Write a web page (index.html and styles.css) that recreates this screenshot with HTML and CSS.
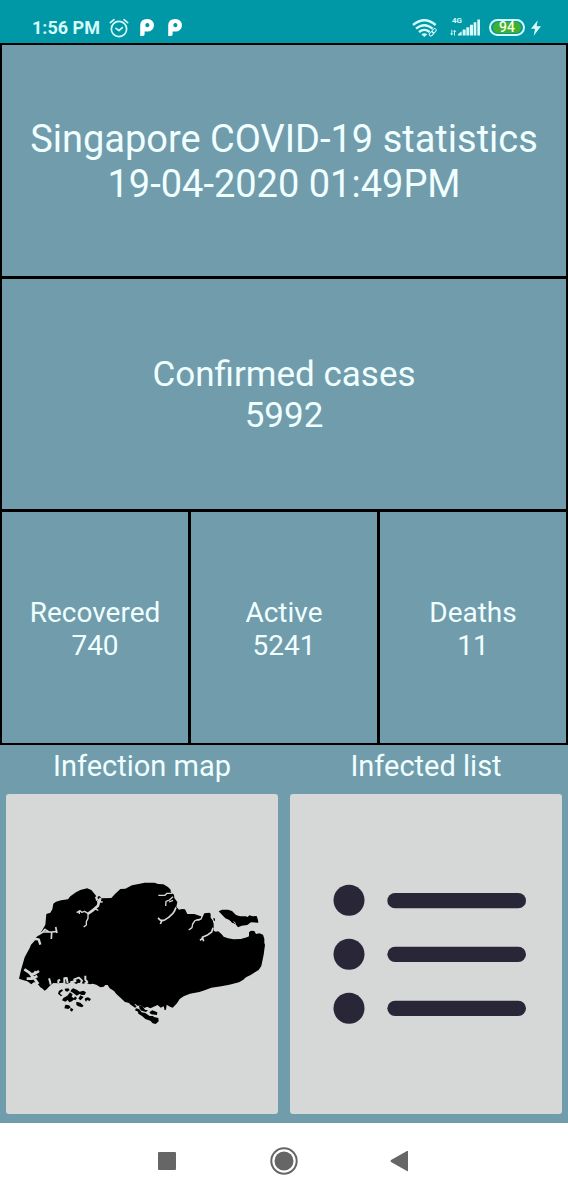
FILE: index.html
```html
<!DOCTYPE html>
<html lang="en">
<head>
<meta charset="utf-8">
<meta name="viewport" content="width=device-width, initial-scale=1">
<title>Singapore COVID-19 statistics</title>
<link rel="stylesheet" href="styles.css">
</head>
<body>
<header class="status">
  <div class="status-left">
    <span class="clock">1:56 PM</span>
    <svg class="alarm" viewBox="0 0 60 60" fill="none" stroke="currentColor" stroke-width="5" stroke-linecap="round" stroke-linejoin="round" aria-hidden="true">
      <circle cx="30" cy="33" r="23"/><path d="M4 14 15 5M56 14 45 5M21 31l9 7 10-9"/>
    </svg>
    <svg class="app" viewBox="0 0 40 50" fill="currentColor" fill-rule="evenodd" aria-hidden="true">
      <path d="M0 50V19Q1 0 20 0h2a18 18 0 0 1 0 37h-9v8q0 5-5 5zM21 12a6 6 0 1 0 .1 0z"/>
    </svg>
    <svg class="app" viewBox="0 0 40 50" fill="currentColor" fill-rule="evenodd" aria-hidden="true">
      <path d="M0 50V19Q1 0 20 0h2a18 18 0 0 1 0 37h-9v8q0 5-5 5zM21 12a6 6 0 1 0 .1 0z"/>
    </svg>
  </div>
  <div class="status-right">
    <svg class="wifi" viewBox="0 0 78 54" fill="none" stroke="currentColor" stroke-width="7" aria-hidden="true">
      <path d="M3 18Q37-11 71 18"/><path d="M12 29q25-21 50 0"/><path d="M21 39q16-13 32 0"/>
      <path d="M28 46q9-7 18 0l-9 8z" fill="currentColor" stroke="none"/>
      <g stroke-width="3"><rect x="62" y="28" width="9" height="14" rx="4" transform="rotate(45 66 35)"/><rect x="54" y="37" width="9" height="14" rx="4" transform="rotate(45 58 44)"/></g>
    </svg>
    <div class="mobile">
      <span class="network">4G</span>
      <svg class="signal" viewBox="0 0 90 50" fill="currentColor" aria-hidden="true">
        <path d="M4 32h3v11h3l-5 6-5-6h4zM15 49h-3V38H9l5-6 5 6h-4z"/>
        <path d="M24 49V45l11-9v13zM38 31h9v18h-9zM49 24h9v25h-9zM60 17h9v32h-9zM71 9h8v40h-8zM82 1h8v48h-8z"/>
      </svg>
    </div>
    <span class="battery"><span class="charge">94</span></span>
    <svg class="bolt" viewBox="0 0 30 46" fill="currentColor" aria-hidden="true"><path d="M20 0 0 25h12L8 46 30 18H17z"/></svg>
  </div>
</header>
<main class="content">
  <section class="stats">
    <h1 class="cell wide title">Singapore COVID-19 statistics<br>19-04-2020 01:49PM</h1>
    <p class="cell wide confirmed">Confirmed cases<br>5992</p>
    <p class="cell">Recovered<br>740</p>
    <p class="cell">Active<br>5241</p>
    <p class="cell">Deaths<br>11</p>
  </section>
  <section class="links">
    <div class="link">
      <span class="label" id="map-label">Infection map</span>
      <button class="tile" type="button" aria-labelledby="map-label">
        <svg class="map" viewBox="24 36 744 430" aria-hidden="true">
          <path d="M27 326 33 300 44 262 59 234 63 224 74 212 77 204 90 191 97 180 106 164 109 132 121 128 127 118 130 101 138 95 153 91 174 88 181 79 198 67 211 60 231 55 244 60 257 76 260 84 267 77 275 85 304 84 315 72 331 57 346 56 366 46 386 42 404 38 434 38 444 42 460 43 474 51 482 59 482 66 492 74 493 84 502 96 499 110 507 119 516 117 525 118 532 132 553 132 568 137 578 140 583 130 598 128 602 131 602 143 608 151 611 162 611 182 617 185 625 184 635 193 641 200 654 205 671 208 692 207 711 202 717 199 717 187 723 182 733 183 738 192 748 190 759 194 763 206 763 219 765 224 761 254 754 288 746 300 736 306 722 315 708 322 700 329 687 337 658 344 634 349 604 353 584 361 568 366 540 371 521 379 509 387 501 400 488 413 480 410 470 404 468 419 464 421 461 409 452 413 443 405 421 415 411 410 404 414 394 407 382 407 376 402 362 403 355 398 345 396 333 385 319 372 312 363 299 355 293 345 286 345 281 350 271 352 259 344 248 341 239 343 228 338 223 341 206 338 198 342 189 335 171 341 160 338 145 340 130 339 119 348 110 358 104 362 96 355 91 352 85 344 79 337 71 337 64 343 52 334 41 331Z"/>
          <path d="M626 124 636 119 654 119 666 123 678 135 690 139 707 139 713 141 718 136 728 139 740 138 744 150 745 158 723 157 712 165 695 167 684 172 677 163 664 158 658 150 646 145Z"/>
          <path d="M610 143l5 3 0 8-4-3z"/>
          <path d="M147 362l9-4 3 4-7 5-2 5 7 4-4 3-9-8zM164 356l11-1 4 5-7 5-6-2zM190 355l10 4 9 6 11-3 8 5-4 8-9 0-6-3-9 5-10-8-9-5 4-6zM180 367l8 6-3 7 9 6-8 8-8 3-5-7-7 5-10-4 4-7 12-7zM195 379l6 5-5 7-6-3zM211 376l10 5-9 10-7-5zM226 384l8-2 9 5-4 6-8-3-3 5-4-6zM199 395l12 3 10 9-5 5-11-3-6-4zM166 404l11 2 5 6-7 5-12-2zM182 413l8 5-4 7-6-4z"/>
          <path d="M359 402l14 0 7 8-5 3zM378 415l9 2 8 10 11 2 13 9 10 0 3 3 13 3 1 10-9 8-9-2-7-8-15-5-10-9-11-7-1-6-9-4zM387 408l10 0 8 11 9 2-6 5-14-4-5-6zM418 427l9-6 15 6-1 8-18-2z"/>
          <g fill="none" stroke="#d6d8d7" stroke-linejoin="round">
            <path d="M258 80l4 12M272 84l-5 12" stroke-width="7"/>
            <path d="M269 87l-5 20-17 15-14 10" stroke-width="8"/><path d="M261 95l17 1M252 115l13 6M236 132l-12-8-9 3-5-5-10 6M234 130v15l-5 10 0 10-8 6M208 124v8" stroke-width="4"/>
            <path d="M84 195l15-9 28 0 12-2M97 187l8-9 14 9M125 187l-1 20M137 171l4 18" stroke-width="5"/><path d="M75 207l11 1 5 16" stroke-width="7"/>
            <path d="M43 298l15 10 15 18 12 16M59 312l14 0 14-9M73 323l9-5M72 312l6-8M66 311v15h-16" stroke-width="8"/>
            <path d="M117 325l3 9 2 10M145 340v-8l5-3M163 341v-16l7-1 3 15M193 336v-8l14-5 9 9-4 9M226 317v12l6 7-8 5M181 337l18-4" stroke-width="6"/>
            <path d="M445 76h20l6-6 16 0M467 108l1-14 10-4 11-10M477 96l12-5" stroke-width="4"/>
            <path d="M498 112l-5 12-5 7-12 11-14 9-10 0-8-7M456 151l-5 11" stroke-width="5"/>
            <path d="M577 137l-4 10-18 5-7 10-2 11-10 7M569 150l-10-1" stroke-width="4"/>
            <path d="M609 173l-4 13-11 8-17 8 4 12M577 205l-7 6" stroke-width="5"/>
            <path d="M660 153l6 8 5 0 4 8M671 154l6 7" stroke-width="3"/>
          </g>
        </svg>
      </button>
    </div>
    <div class="link">
      <span class="label" id="list-label">Infected list</span>
      <button class="tile" type="button" aria-labelledby="list-label">
        <svg class="list" viewBox="18 0 600 500" fill="#282637" aria-hidden="true">
          <circle cx="87" cy="88" r="46.500"/><circle cx="87" cy="250" r="46.500"/><circle cx="87" cy="412" r="46.500"/>
          <rect x="202" y="66" width="416" height="46" rx="23"/><rect x="202" y="227" width="416" height="46" rx="23"/><rect x="202" y="389" width="416" height="46" rx="23"/>
        </svg>
      </button>
    </div>
  </section>
</main>
<nav class="nav" aria-label="System">
  <button class="key" type="button" aria-label="Recent apps"><svg viewBox="0 0 28 28"><rect x="5" y="5" width="18" height="18" rx="1"/></svg></button>
  <button class="key" type="button" aria-label="Home"><svg viewBox="0 0 28 28"><circle cx="14" cy="14" r="9.500"/><circle cx="14" cy="14" r="12.700" fill="none" stroke="#666" stroke-width="2"/></svg></button>
  <button class="key" type="button" aria-label="Back"><svg viewBox="0 0 28 28"><path d="M21 4v20a1 1 0 0 1-1 0L4 15q-1-1 0-2L20 4z"/></svg></button>
</nav>
</body>
</html>
```
FILE: styles.css
```css
* { box-sizing: border-box; }
body {
  margin: 0;
  min-height: 100vh;
  display: flex;
  flex-direction: column;
  background: #719cac;
  color: azure;
  font-family: Roboto, "Liberation Sans", sans-serif;
}
button { border: 0; padding: 0; cursor: pointer; }
svg { display: block; }

.status {
  height: 43px;
  padding: 12px 27px 0 32px;
  display: flex;
  justify-content: space-between;
  background: #0097a7;
  color: #d5fbfa;
}
.status-left, .status-right { display: flex; align-items: center; height: 31px; }
.clock { font-size: 18px; font-weight: 700; line-height: 21px; margin-right: 9px; }
.alarm { width: 20px; height: 20px; margin-right: 11px; }
.app { width: 14px; height: 17px; margin-right: 14px; color: #fff; }
.wifi { width: 26px; height: 18px; margin-right: 12px; }
.mobile { position: relative; margin-right: 9px; }
.signal { width: 30px; height: 17px; }
.network { position: absolute; left: 2px; top: -3px; font-size: 8px; line-height: 9px; font-weight: 700; }
.battery {
  width: 36px;
  height: 17px;
  padding: 1px 2px;
  border: 2px solid currentColor;
  border-radius: 9px;
  margin-right: 6px;
  display: flex;
}
.charge {
  flex: 1;
  display: flex;
  align-items: center;
  justify-content: center;
  border-radius: 6px;
  background: #43b02a;
  color: #f4fff0;
  font-size: 14px;
  font-weight: 500;
  line-height: 11px;
}
.bolt { width: 10px; height: 16px; }

.content { flex: 1; display: flex; flex-direction: column; }
.stats {
  flex: 698 0 0;
  display: grid;
  grid-template-columns: repeat(3, 1fr);
  grid-template-rows: repeat(3, 1fr);
  gap: 3px;
  padding: 2px;
  background: #000;
}
.cell {
  margin: 0;
  padding-top: 3px;
  display: flex;
  flex-direction: column;
  justify-content: center;
  text-align: center;
  background: #719cac;
  font-size: 28px;
  line-height: 33px;
  font-weight: 400;
}
.wide { grid-column: 1 / -1; }
.title { font-size: 38px; line-height: 45px; }
.confirmed { font-size: 35px; line-height: 41px; }

.links {
  flex: 364 0 0;
  display: grid;
  grid-template-columns: 1fr 1fr;
  gap: 12px;
  padding: 5px 6px 9px;
}
.link { display: flex; flex-direction: column; gap: 11px; text-align: center; }
.label { font-size: 29px; line-height: 33px; }
.tile {
  flex: 1;
  display: grid;
  place-items: center;
  border-radius: 3px;
  background: #d6d8d7;
}
.map { width: 248px; }
.list { width: 200px; }

.nav {
  height: 76px;
  display: flex;
  align-items: center;
  justify-content: center;
  gap: 89px;
  background: #fff;
}
.key { width: 28px; height: 28px; background: none; fill: #666; }
```
